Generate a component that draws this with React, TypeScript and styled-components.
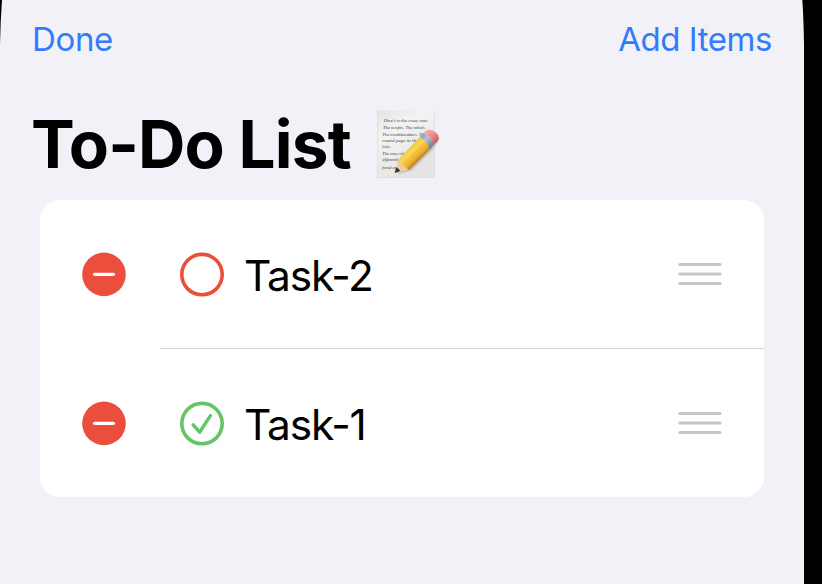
import React from "react";
import styled, { createGlobalStyle } from "styled-components";

const GlobalStyle = createGlobalStyle`
  * { box-sizing: border-box; }
  body { margin: 0; background: #000; overflow: hidden; }
`;

const Screen = styled.main`
  width: 804px;
  height: 584px;
  background: #f2f1f7;
  color: #000;
  font-family: Inter, "Liberation Sans", sans-serif;
  clip-path: path("M2 0 Q0.4 22 0 45 V584 H804 V45 Q803.6 18 802.3 0 Z");
`;

const NavBar = styled.nav`
  display: flex;
  justify-content: space-between;
  height: 78px;
  padding: 0 32px;
`;

const NavButton = styled.button<{ $tracking: number }>`
  border: 0;
  padding: 0;
  background: none;
  color: #347cf7;
  font: 400 33px/78px Inter, "Liberation Sans", sans-serif;
  letter-spacing: ${(p) => p.$tracking}px;
`;

const Header = styled.header`
  display: flex;
  height: 122px;
  padding: 22px 0 0 31px;
`;

const Title = styled.h1`
  width: 334px;
  margin: 4px 0 0;
  font-size: 65.6px;
  line-height: 80px;
  font-weight: 700;
  letter-spacing: -0.85px;
  white-space: nowrap;
`;

const List = styled.ul`
  list-style: none;
  margin: 0 40px;
  padding: 0;
  background: #fff;
  border-radius: 20px;
  overflow: hidden;
`;

const Row = styled.li`
  display: flex;
  align-items: center;
  height: 148px;
  padding-left: 42px;
`;

const Separator = styled.li`
  height: 1px;
  margin-left: 120px;
  background: #d4d4d6;
`;

const IconButton = styled.button<{ $gap: number }>`
  display: flex;
  border: 0;
  padding: 0;
  margin-right: ${(p) => p.$gap}px;
  background: none;

  svg { overflow: visible; }
`;

const Label = styled.span`
  flex: 1;
  padding-top: 2px;
  font-size: 42.4px;
  line-height: 51px;
  letter-spacing: -1.15px;
`;

const RemoveIcon = () => (
  <svg width="44" height="44" viewBox="0 0 44 44">
    <circle cx="22" cy="22.4" r="21.8" fill="#eb4e3d" />
    <path d="M12.6 22.3H31.4" stroke="#fff" strokeWidth="3.2" strokeLinecap="round" />
  </svg>
);

const StatusIcon = ({ done }: { done: boolean }) => (
  <svg width="44" height="44" viewBox="0 0 44 44" fill="none" stroke={done ? "#65c466" : "#eb4e3d"}>
    <circle cx="22" cy="22.6" r="20.2" strokeWidth="3.6" />
    {done && (
      <path d="M13.2 23.9L19.6 31.2L30.5 14.6" strokeWidth="3.4" strokeLinecap="round" strokeLinejoin="round" />
    )}
  </svg>
);

const HandleIcon = () => (
  <svg width="44" height="24" viewBox="0 0 44 24" stroke="#c5c5c7" strokeWidth="3" strokeLinecap="round">
    <path d="M1.8 2.5H42M1.8 12H42M1.8 21.5H42" />
  </svg>
);

const memoLines: [string, number, number, number][] = [
  ["Here's to the crazy ones", 56, 67, 132],
  ["The misfits.  The rebels.", 54, 87, 128],
  ["The troublemakers. The", 52, 108, 130],
  ["round pegs in the", 52, 126, 108],
  ["holes.", 52, 143, 26],
  ["The ones who see", 52, 164, 92],
  ["differently. They", 52, 184, 80],
  ["fond of", 52, 207, 42],
];

const MemoIcon = () => (
  <svg width="85" height="85" viewBox="0 0 255 255">
    <defs>
      <linearGradient id="paper" x1="0" y1="0" x2="0.5" y2="1">
        <stop offset="0" stopColor="#e4e4e4" />
        <stop offset="0.35" stopColor="#f3f3f2" />
        <stop offset="1" stopColor="#e4e4e3" />
      </linearGradient>
      <linearGradient id="wood" gradientUnits="userSpaceOnUse" x1="131" y1="145" x2="163" y2="178">
        <stop offset="0" stopColor="#f2cb46" />
        <stop offset="0.35" stopColor="#fbd850" />
        <stop offset="0.45" stopColor="#f5c63b" />
        <stop offset="0.75" stopColor="#ebb230" />
        <stop offset="1" stopColor="#bf851f" />
      </linearGradient>
      <linearGradient id="ferrule" gradientUnits="userSpaceOnUse" x1="170" y1="105" x2="202" y2="138">
        <stop offset="0" stopColor="#8a9fb2" />
        <stop offset="0.4" stopColor="#c3d0da" />
        <stop offset="1" stopColor="#6c7c8f" />
      </linearGradient>
      <linearGradient id="eraser" gradientUnits="userSpaceOnUse" x1="188" y1="90" x2="215" y2="121">
        <stop offset="0" stopColor="#f5adb0" />
        <stop offset="0.5" stopColor="#ec8d93" />
        <stop offset="1" stopColor="#c9626c" />
      </linearGradient>
      <filter id="soft" x="-20%" y="-20%" width="140%" height="140%">
        <feGaussianBlur stdDeviation="3" />
      </filter>
    </defs>
    <rect x="37" y="31" width="172" height="202" fill="url(#paper)" />
    <path d="M38 31V232.5H208.5V31" fill="none" stroke="#d3d3d5" strokeWidth="1.6" />
    <g fill="#3c3c3e" fontFamily='"Liberation Serif", serif' fontStyle="italic" fontSize="14.5">
      {memoLines.map(([text, x, y, width]) => (
        <text key={text} x={x} y={y} textLength={width} lengthAdjust="spacingAndGlyphs">
          {text}
        </text>
      ))}
    </g>
    <path d="M96 222L138 210L202 148L220 122L206 118Z" fill="#555" opacity="0.4" filter="url(#soft)" />
    <path d="M89 219L101 177L133 209Z" fill="#eccf9c" />
    <path d="M89 219L94 202Q102 207 106 213Z" fill="#333336" />
    <path d="M101 178L164 111Q184 122 196 146L133 209Q126 210 124 201Q113 202 113 190Q103 190 101 178Z" fill="url(#wood)" />
    <path d="M164 112L176 99Q196 109 208 132L195 147Q184 124 164 112Z" fill="url(#ferrule)" />
    <path d="M169 107Q189 118 201 141M173 103Q193 114 205 137" fill="none" stroke="#7c8c9f" strokeWidth="1.3" />
    <path d="M176 99L182 92Q192 86 206 93Q222 102 222 116Q219 125 208 132Q196 109 176 99Z" fill="url(#eraser)" />
  </svg>
);

const tasks = [
  { name: "Task-2", done: false },
  { name: "Task-1", done: true },
];

export default function App() {
  return (
    <>
      <GlobalStyle />
      <Screen>
        <NavBar>
          <NavButton $tracking={-0.35}>Done</NavButton>
          <NavButton $tracking={-0.45}>Add Items</NavButton>
        </NavBar>
        <Header>
          <Title>To-Do List</Title>
          <MemoIcon />
        </Header>
        <List>
          {tasks.map((task, i) => (
            <React.Fragment key={task.name}>
              {i > 0 && <Separator role="separator" />}
              <Row>
                <IconButton $gap={54} aria-label="Delete"><RemoveIcon /></IconButton>
                <IconButton $gap={20} aria-label="Toggle"><StatusIcon done={task.done} /></IconButton>
                <Label>{task.name}</Label>
                <IconButton $gap={42} aria-label="Reorder"><HandleIcon /></IconButton>
              </Row>
            </React.Fragment>
          ))}
        </List>
      </Screen>
    </>
  );
}
